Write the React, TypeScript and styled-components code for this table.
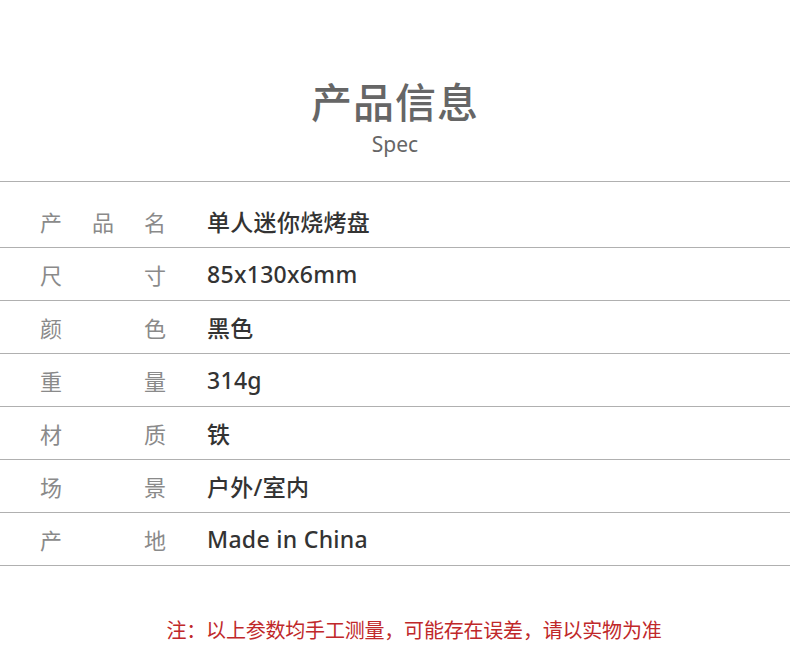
import styled, { createGlobalStyle } from "styled-components";

const GlobalStyle = createGlobalStyle`
  body {
    margin: 0;
    background: #fff;
    font-family: "Noto Sans CJK SC", "Noto Sans", sans-serif;
  }
`;

const Page = styled.div`
  width: 790px;
  height: 666px;
  overflow: hidden;
`;

const Header = styled.header`
  padding-top: 77px;
  display: flex;
  flex-direction: column;
  align-items: center;
`;

const Title = styled.h1`
  margin: 0;
  font-size: 41px;
  line-height: 46px;
  font-weight: 500;
  color: #666;
  letter-spacing: 1px;
`;

const Subtitle = styled.div`
  margin-top: 8px;
  font-family: "Noto Sans", "Noto Sans CJK SC", sans-serif;
  font-size: 21px;
  line-height: 26px;
  font-weight: 400;
  color: #666;
`;

const Table = styled.div`
  margin-top: 24px;
  border-top: 1px solid #b0b0b0;
  padding-top: 13px;
`;

const Row = styled.div`
  height: 52px;
  border-bottom: 1px solid #b0b0b0;
  display: flex;
  align-items: center;
  padding-left: 40px;
  font-size: 22px;
`;

const Label = styled.div`
  width: 126px;
  display: flex;
  justify-content: space-between;
  color: #8a8a8a;
`;

const Value = styled.div`
  margin-left: 41px;
  font-family: "Noto Sans", "Noto Sans CJK SC", sans-serif;
  font-size: 23px;
  color: #333;
  font-weight: 500;
  letter-spacing: 0.3px;
`;

const Note = styled.p`
  margin: 52px 0 0;
  padding-left: 38px;
  text-align: center;
  font-size: 20px;
  line-height: 24px;
  letter-spacing: -0.2px;
  color: #c0282a;
`;

const specs = [
  ["产品名", "单人迷你烧烤盘"],
  ["尺寸", "85x130x6mm"],
  ["颜色", "黑色"],
  ["重量", "314g"],
  ["材质", "铁"],
  ["场景", "户外/室内"],
  ["产地", "Made in China"],
];

export default function App() {
  return (
    <Page>
      <GlobalStyle />
      <Header>
        <Title>产品信息</Title>
        <Subtitle>Spec</Subtitle>
      </Header>
      <Table>
        {specs.map(([label, value]) => (
          <Row key={label}>
            <Label>
              {label.split("").map((ch, i) => (
                <span key={i}>{ch}</span>
              ))}
            </Label>
            <Value>{value}</Value>
          </Row>
        ))}
      </Table>
      <Note>注：以上参数均手工测量，可能存在误差，请以实物为准</Note>
    </Page>
  );
}
